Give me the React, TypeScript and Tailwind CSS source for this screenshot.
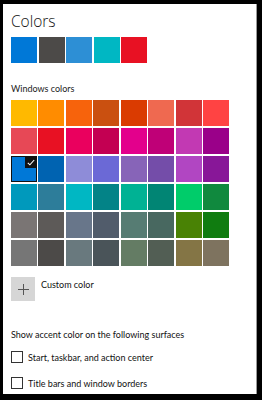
const recent = ['#0078D7', '#4C4A48', '#2D8FD5', '#00B7C3', '#E81123'];

const palette = [
  ['#FFB900', '#FF8C00', '#F7630C', '#CA5010', '#DA3B01', '#EF6950', '#D13438', '#FF4343'],
  ['#E74856', '#E81123', '#EA005E', '#C30052', '#E3008C', '#BF0077', '#C239B3', '#9A0089'],
  ['#0078D7', '#0063B1', '#8E8CD8', '#6B69D6', '#8764B8', '#744DA9', '#B146C2', '#881798'],
  ['#0099BC', '#2D7D9A', '#00B7C3', '#038387', '#00B294', '#018574', '#00CC6A', '#10893E'],
  ['#7A7574', '#5D5A58', '#68768A', '#515C6B', '#567C73', '#486860', '#498205', '#107C10'],
  ['#767676', '#4C4A48', '#69797E', '#4A5459', '#647C64', '#525E54', '#847545', '#7E735F'],
];

function Checkbox({ label }: { label: string }) {
  return (
    <label className="flex items-center gap-[5px] h-[12px]">
      <span className="w-[12px] h-[12px] border-[1.5px] border-[#333] bg-white shrink-0" />
      <span className="text-[9px] text-[#111] leading-none">{label}</span>
    </label>
  );
}

export default function App() {
  return (
    <div
      className="w-[262px] h-[400px] bg-black pt-[4px] pl-[3px] pr-[5px] pb-[6px]"
      style={{ fontFamily: 'Lato, "Open Sans", sans-serif' }}
    >
      <div className="h-full bg-white border-r border-[#9a9a9a] pl-[8px] pt-[5px]">
        <h1
          className="text-[15.5px] font-light text-[#111] leading-[24px]"
          style={{ fontFamily: '"Open Sans", sans-serif' }}
        >
          Colors
        </h1>

        {/* Recent colours */}
        <div className="flex gap-[1.5px] mt-[4px]">
          {recent.map((c, i) => (
            <div key={i} className="w-[26px] h-[26px]" style={{ background: c }} />
          ))}
        </div>

        <p className="text-[9px] text-[#222] mt-[19px] leading-[14px]">Windows colors</p>

        {/* Accent palette */}
        <div className="grid grid-cols-8 gap-x-[1.5px] gap-y-[2px] w-[218px] mt-[4px]">
          {palette.flat().map((c, i) => (
            <div key={i} className="relative h-[26px]" style={{ background: c }}>
              {i === 16 && (
                <>
                  <div className="absolute inset-0 border border-[#111]" />
                  <div className="absolute top-0 right-0 w-[12px] h-[12px] bg-[#111] flex items-center justify-center">
                    <svg width="8" height="7" viewBox="0 0 8 7" fill="none">
                      <path d="M0.8 3.8 L2.9 5.8 L7.2 1" stroke="white" strokeWidth="1.1" />
                    </svg>
                  </div>
                </>
              )}
            </div>
          ))}
        </div>

        {/* Custom colour */}
        <div className="flex items-start gap-[6px] mt-[11px]">
          <div className="w-[24px] h-[24px] bg-[#d6d6d6] flex items-center justify-center">
            <svg width="11" height="11" viewBox="0 0 11 11">
              <path d="M5.5 0 V11 M0 5.5 H11" stroke="#555" strokeWidth="1" />
            </svg>
          </div>
          <span className="text-[9px] text-[#111] leading-[14px] mt-[1px]">Custom color</span>
        </div>

        <p className="text-[9px] text-[#111] mt-[27px] leading-[14px]">
          Show accent color on the following surfaces
        </p>

        <div className="flex flex-col gap-[14px] mt-[9px]">
          <Checkbox label="Start, taskbar, and action center" />
          <Checkbox label="Title bars and window borders" />
        </div>
      </div>
    </div>
  );
}
